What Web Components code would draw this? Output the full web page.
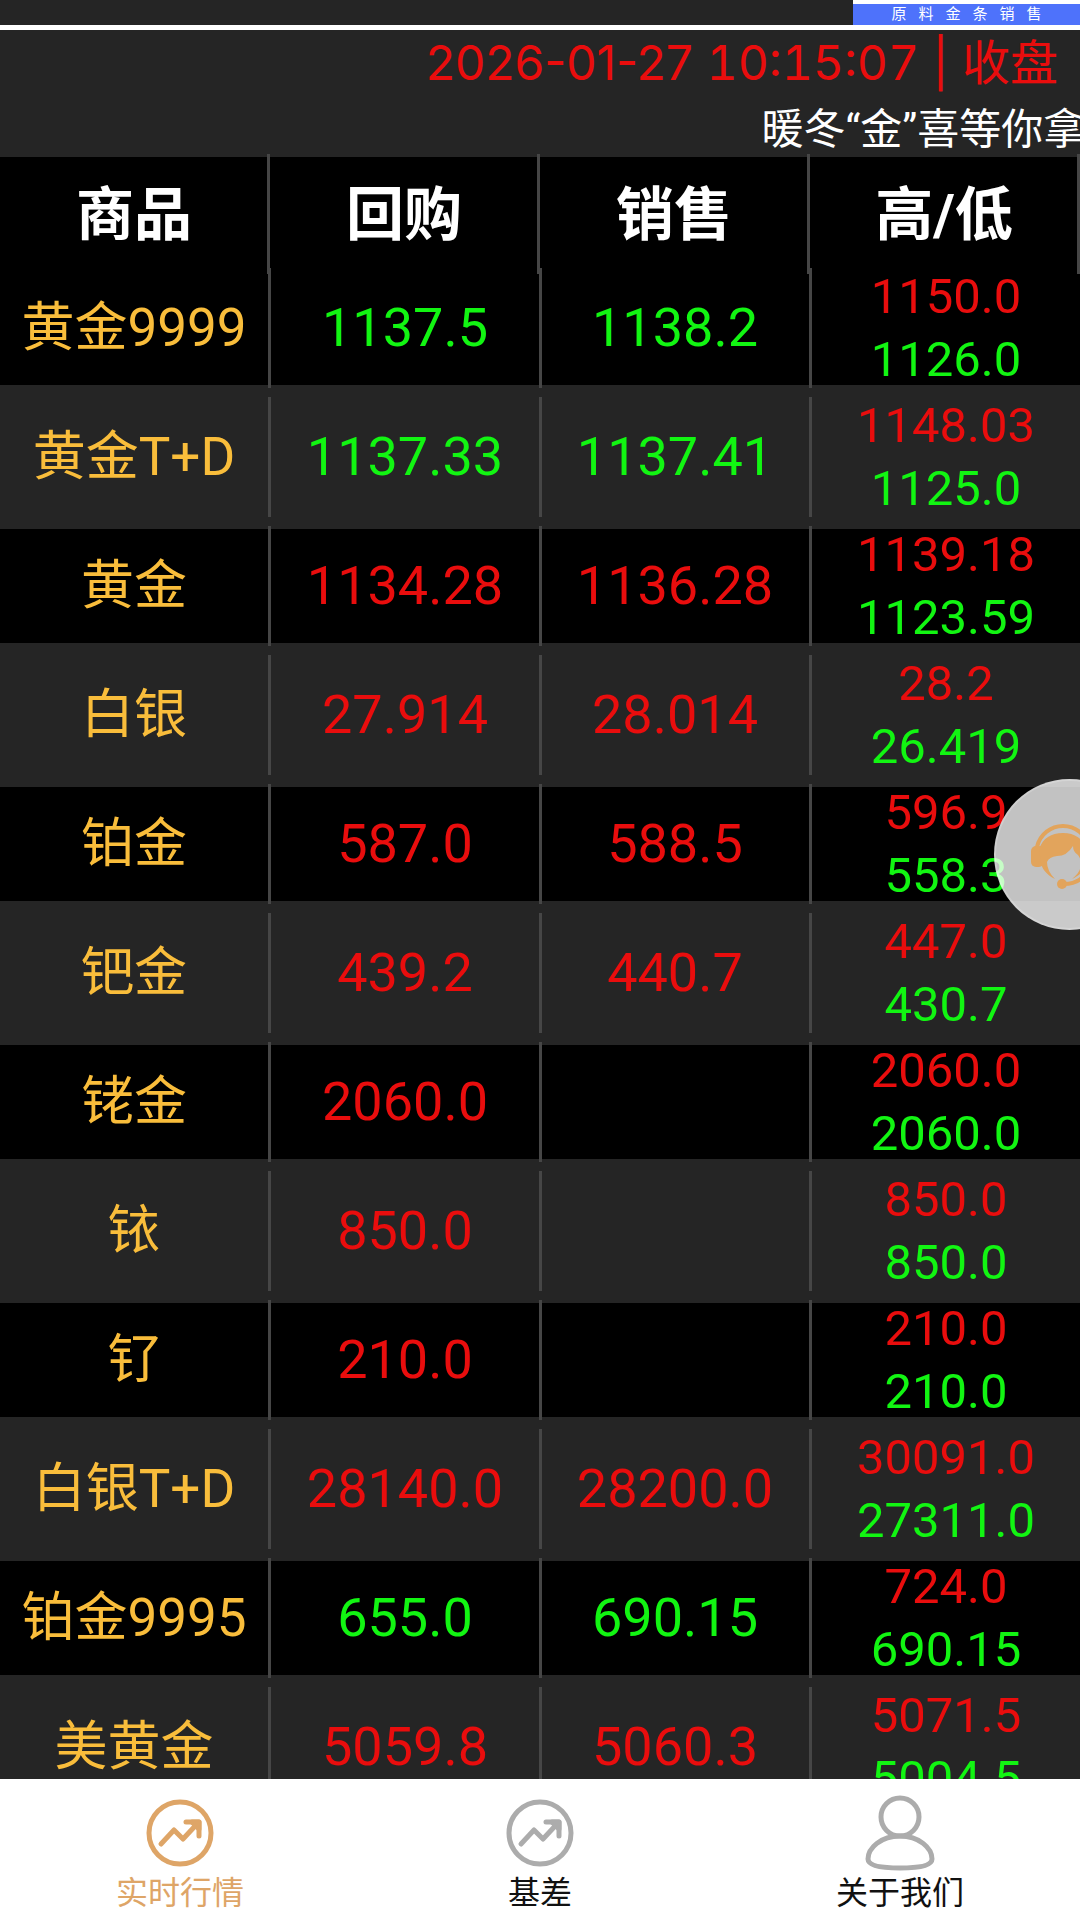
<!DOCTYPE html>
<html lang="zh-CN">
<head>
<meta charset="UTF-8">
<meta name="viewport" content="width=device-width, initial-scale=1">
<title>实时行情</title>
<style>
    html, body {
        margin: 0;
        height: 100%;
    }
    body {
        --panel: #252525;
        --line: #464646;
        --up: #e90d0d;
        --down: #12f512;
        --name: #f9bd3b;
        --accent: #dea567;
        font-family: Roboto, "Noto Sans CJK SC", sans-serif;
        background: var(--panel);
    }
</style>
</head>
<body>
<quote-app></quote-app>

<script>
const quotes = [
    ["黄金9999", "1137.5", "1138.2", "1150.0", "1126.0", "down"],
    ["黄金T+D", "1137.33", "1137.41", "1148.03", "1125.0", "down"],
    ["黄金", "1134.28", "1136.28", "1139.18", "1123.59", "up"],
    ["白银", "27.914", "28.014", "28.2", "26.419", "up"],
    ["铂金", "587.0", "588.5", "596.9", "558.3", "up"],
    ["钯金", "439.2", "440.7", "447.0", "430.7", "up"],
    ["铑金", "2060.0", "", "2060.0", "2060.0", "up"],
    ["铱", "850.0", "", "850.0", "850.0", "up"],
    ["钌", "210.0", "", "210.0", "210.0", "up"],
    ["白银T+D", "28140.0", "28200.0", "30091.0", "27311.0", "up"],
    ["铂金9995", "655.0", "690.15", "724.0", "690.15", "down"],
    ["美黄金", "5059.8", "5060.3", "5071.5", "5004.5", "up"]
];

const icons = {
    trend: `<svg viewBox="0 0 80 80" aria-hidden="true">
        <circle cx="40" cy="42" r="31"/>
        <path d="M21 53 34 39 43 48 57 33"/>
        <path d="M46 31H59V45"/>
        <path d="M52 31H59V38Z"/>
    </svg>`,
    user: `<svg viewBox="0 0 80 80" aria-hidden="true">
        <circle cx="40" cy="26" r="19"/>
        <path d="M40 45C21 45 8 57 8 68C8 75 22 77 40 77S72 75 72 68C72 57 59 45 40 45Z"/>
    </svg>`
};

class PromoStrip extends HTMLElement {
    constructor(){
        super();
        const shadowRoot = this.attachShadow({ mode: 'open'});
        shadowRoot.innerHTML = `
        <style>
        :host {
            display: flex;
            justify-content: flex-end;
            height: 25px;
            border-bottom: 5px solid #fff;
            overflow: hidden;
        }
        a {
            box-sizing: border-box;
            width: 21%;
            border-top: 4px solid #fff;
            background: #4e72fb;
            color: #fff;
            font-size: 15px;
            line-height: 20px;
            letter-spacing: 12px;
            text-align: center;
            text-indent: 12px;
            text-decoration: none;
            white-space: nowrap;
        }
        </style>
        <a href="#sale"><slot></slot></a>
        `
    }
}

class QuoteClock extends HTMLElement {
    constructor(){
        super();
        const shadowRoot = this.attachShadow({ mode: 'open'});
        shadowRoot.innerHTML = `
        <style>
        :host {
            display: block;
            padding: 0 22px;
            color: var(--up);
            font-family: Inter, "Noto Sans CJK SC", sans-serif;
            font-size: 48px;
            line-height: 66px;
            text-align: right;
            white-space: nowrap;
        }
        ::slotted(time) {
            font-variant-numeric: tabular-nums;
        }
        </style>
        <slot></slot>
        `
    }
}

class NoticeTicker extends HTMLElement {
    constructor(){
        super();
        const shadowRoot = this.attachShadow({ mode: 'open'});
        shadowRoot.innerHTML = `
        <style>
        :host {
            display: block;
            padding: 6px 0 0 70.5%;
            color: #fff;
            font-size: 42px;
            line-height: 55px;
            white-space: nowrap;
            overflow: hidden;
        }
        </style>
        <slot></slot>
        `
    }
}

class QuoteTable extends HTMLElement {
    constructor(){
        super();
        const shadowRoot = this.attachShadow({ mode: 'open'});
        shadowRoot.innerHTML = `
        <style>
        :host {
            display: block;
            font-size: 54px;
            line-height: 64px;
        }
        table {
            width: 100%;
            table-layout: fixed;
            border-collapse: collapse;
            color: var(--up);
        }
        tr {
            height: 114px;
            background: #000;
        }
        tbody tr:nth-child(even) {
            height: 144px;
            background: var(--panel);
        }
        th, td {
            position: relative;
            padding: 0;
            text-align: center;
            font-weight: 400;
            white-space: nowrap;
        }
        thead th {
            padding: 2px 2px 0 0;
            color: #fff;
            font-size: 58px;
            font-weight: 700;
        }
        tbody th {
            padding: 0 2px 0 0;
            color: var(--name);
            font-size: 53px;
        }
        /* column rules are 120px tall on every row, whatever the row height */
        th::after, td:not(:last-child)::after {
            content: "";
            position: absolute;
            top: calc(50% - 60px);
            right: -2px;
            width: 3px;
            height: 120px;
            background: var(--line);
        }
        tbody th::after {
            right: -1px;
        }
        thead th::after {
            right: 0;
        }
        .down {
            color: var(--down);
        }
        .range {
            padding-left: 2px;
            font-size: 49px;
            line-height: 48px;
        }
        .range span {
            display: block;
        }
        .range span + span {
            margin-top: 15px;
        }
        </style>
        <table>
            <thead>
                <tr>
                    <th scope="col">商品</th>
                    <th scope="col">回购</th>
                    <th scope="col">销售</th>
                    <th scope="col">高/低</th>
                </tr>
            </thead>
            <tbody>
                ${quotes.map(([name, buy, sell, high, low, trend]) => `
                <tr>
                    <th scope="row">${name}</th>
                    <td class="${trend}">${buy}</td>
                    <td class="${trend}">${sell}</td>
                    <td class="range"><span>${high}</span><span class="down">${low}</span></td>
                </tr>`).join("")}
            </tbody>
        </table>
        `
    }
}

class SupportButton extends HTMLElement {
    constructor(){
        super();
        const shadowRoot = this.attachShadow({ mode: 'open'});
        shadowRoot.innerHTML = `
        <style>
        :host {
            position: fixed;
            top: 779px;
            right: -65px;
        }
        button {
            display: block;
            box-sizing: border-box;
            width: 151px;
            height: 151px;
            padding: 0;
            border: 2px solid rgba(255, 255, 255, 0.2);
            border-radius: 50%;
            background: rgba(255, 255, 255, 0.76);
        }
        svg {
            display: block;
            width: 80px;
            height: 80px;
            margin: 0 auto;
            fill: #e2a45c;
        }
        .line {
            fill: none;
            stroke: #e2a45c;
            stroke-width: 4;
            stroke-linecap: round;
        }
        </style>
        <button aria-label="客服">
            <svg viewBox="0 0 80 80" aria-hidden="true">
                <g transform="translate(-1 2)">
                    <path class="line" d="M8 30C11 17 22 9 34 9S57 17 60 30"/>
                    <rect x="2" y="29" width="13" height="21" rx="5"/>
                    <rect x="55" y="29" width="13" height="21" rx="5"/>
                    <path d="M10 32C14 21 22 16 34 16C46 16 54 22 58 32V45C55 54 50 59 43 62C52 55 55 46 49 38Q44 35 44 29Q38 39 28 39Q20 40 18 45Q18 54 26 62C18 58 13 52 12 46Z"/>
                    <circle cx="33" cy="67" r="5"/>
                    <path class="line" d="M35 67Q54 67 61 49"/>
                </g>
            </svg>
        </button>
        `
    }
}

class TabItem extends HTMLElement {
    constructor(){
        super();
        const shadowRoot = this.attachShadow({ mode: 'open'});
        shadowRoot.innerHTML = `
        <style>
        :host {
            display: block;
            flex: 1;
            color: #111;
            --icon: #acacac;
        }
        :host([active]) {
            color: var(--accent);
            --icon: var(--accent);
        }
        a {
            display: flex;
            flex-direction: column;
            align-items: center;
            padding: 12px 0 14px;
            color: inherit;
            font-size: 32px;
            line-height: 44px;
            text-decoration: none;
        }
        svg {
            width: 80px;
            height: 80px;
            fill: none;
            stroke: var(--icon);
            stroke-width: 5;
            stroke-linecap: round;
            stroke-linejoin: round;
        }
        </style>
        <a href="#${this.getAttribute("icon")}">
            ${icons[this.getAttribute("icon")]}
            <slot></slot>
        </a>
        `
    }
}

class QuoteApp extends HTMLElement {
    constructor(){
        super();
        const shadowRoot = this.attachShadow({ mode: 'open'});
        shadowRoot.innerHTML = `
        <style>
        :host {
            display: flex;
            flex-direction: column;
            height: 100vh;
            overflow: hidden;
        }
        header {
            flex: none;
        }
        main {
            flex: 1;
            min-height: 0;
            /* the header rules stick out 3px above the table */
            margin-top: -3px;
            padding-top: 3px;
            overflow: hidden;
        }
        nav {
            display: flex;
            flex: none;
            background: #fff;
        }
        </style>
        <header>
            <promo-strip>原料金条销售</promo-strip>
            <quote-clock>2026-01-27 <time>10:15:07</time> | 收盘</quote-clock>
            <notice-ticker>暖冬“金”喜等你拿</notice-ticker>
        </header>
        <main>
            <quote-table></quote-table>
        </main>
        <nav>
            <tab-item icon="trend" active>实时行情</tab-item>
            <tab-item icon="trend">基差</tab-item>
            <tab-item icon="user">关于我们</tab-item>
        </nav>
        <support-button></support-button>
        `
    }
}

window.customElements.define('promo-strip', PromoStrip);
window.customElements.define('quote-clock', QuoteClock);
window.customElements.define('notice-ticker', NoticeTicker);
window.customElements.define('quote-table', QuoteTable);
window.customElements.define('support-button', SupportButton);
window.customElements.define('tab-item', TabItem);
window.customElements.define('quote-app', QuoteApp);
</script>
</body>
</html>
